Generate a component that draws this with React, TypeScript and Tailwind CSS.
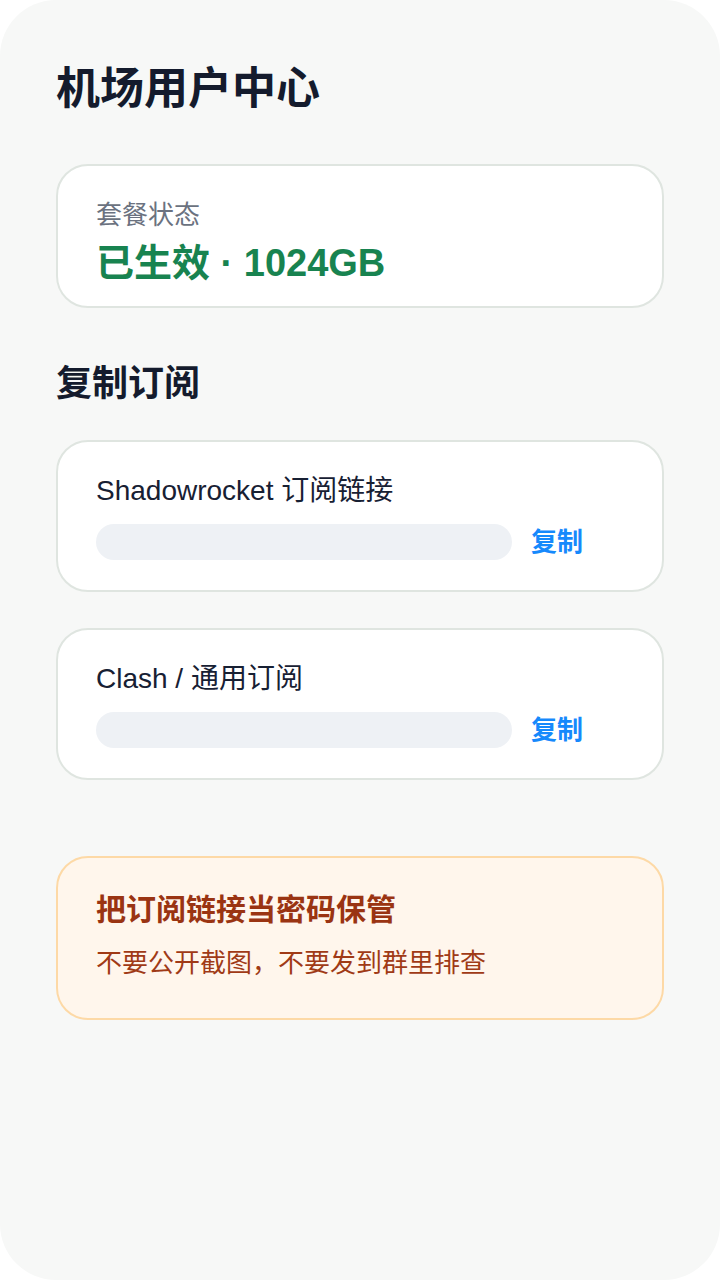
const font = { fontFamily: '"Liberation Sans", "Noto Sans CJK SC", sans-serif' };

function LinkCard({ label }: { label: string }) {
  return (
    <div className="mt-[36px] rounded-[32px] border-2 border-[#dfe5e0] bg-white px-[38px] pt-[31px] pb-[30px] first:mt-0">
      <div className="text-[28px] leading-[36px] text-[#172033]">{label}</div>
      <div className="mt-[15px] flex items-center">
        <div className="h-[36px] w-[416px] rounded-full bg-[#eef1f5]" />
        <button className="ml-[19px] text-[26px] font-bold leading-[36px] text-[#1689fc]">复制</button>
      </div>
    </div>
  );
}

export default function App() {
  return (
    <div className="bg-white" style={font}>
      <div className="h-[1280px] w-[720px] rounded-[56px] bg-[#f7f8f7] px-14 pt-[63px]">
        <h1 className="text-[44px] font-bold leading-[52px] text-[#141b2d]">机场用户中心</h1>

        <div className="mt-[49px] rounded-[32px] border-2 border-[#dfe5e0] bg-white px-[38px] pt-[33px] pb-[21px]">
          <div className="text-[26px] leading-[32px] text-[#6b7280]">套餐状态</div>
          <div className="mt-[10px] text-[38px] font-bold leading-[44px] text-[#188350]">已生效 · 1024GB</div>
        </div>

        <h2 className="mt-[54px] text-[36px] font-bold leading-[44px] text-[#141b2d]">复制订阅</h2>

        <div className="mt-[34px]">
          <LinkCard label="Shadowrocket 订阅链接" />
          <LinkCard label="Clash / 通用订阅" />
        </div>

        <div className="mt-[76px] rounded-[32px] border-2 border-[#fdd9a6] bg-[#fff6ec] px-[38px] pt-[32px] pb-[37px]">
          <div className="text-[30px] font-bold leading-[40px] text-[#9a3412]">把订阅链接当密码保管</div>
          <div className="mt-[15px] text-[26px] leading-[36px] text-[#a03a16]">不要公开截图，不要发到群里排查</div>
        </div>
      </div>
    </div>
  );
}
